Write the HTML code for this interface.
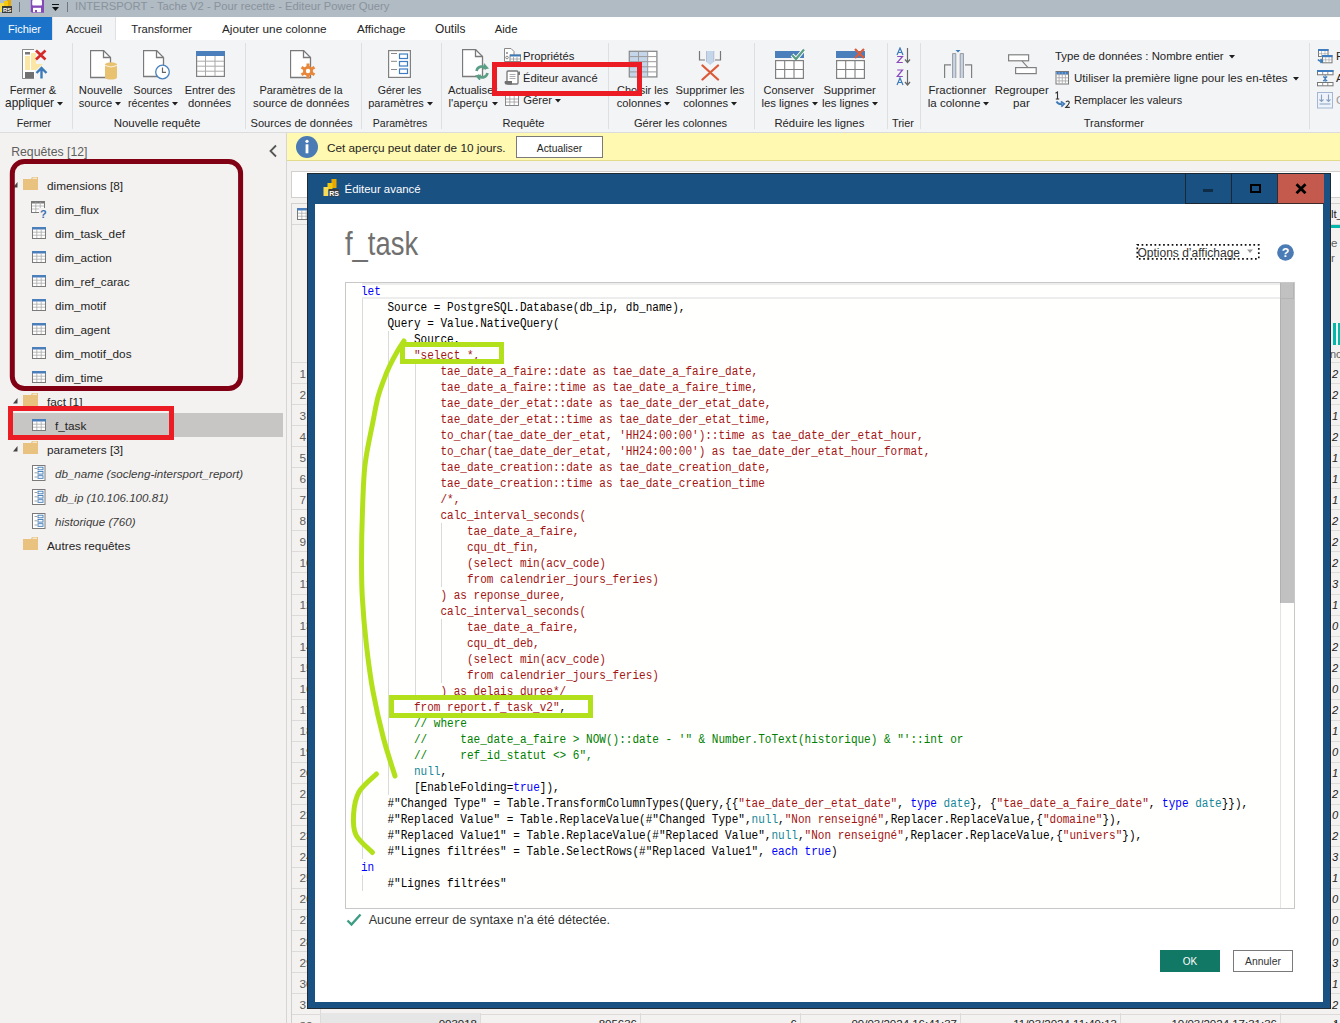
<!DOCTYPE html>
<html><head><meta charset="utf-8"><title>Power Query</title>
<style>
html,body{margin:0;padding:0;}
body{width:1340px;height:1023px;position:relative;overflow:hidden;background:#f3f2f1;font-family:"Liberation Sans",sans-serif;}
.t{position:absolute;white-space:nowrap;line-height:40px;}
.r{position:absolute;box-sizing:border-box;}
.code{position:absolute;font-family:"Liberation Mono",monospace;font-size:12px;line-height:16px;white-space:pre;color:#000;transform:scaleX(0.9193);transform-origin:0 0;}
.k{color:#0000ff}.s{color:#a31515}.c{color:#008000}.n{color:#16879a}
</style></head><body>

<div class="r" style="left:0px;top:0px;width:1340px;height:17px;background:#b0bbc4"></div>
<div class="t" style="left:75.0px;top:-14.00px;font-size:11.25px;color:#8a929b;">INTERSPORT - Tache V2 - Pour recette - Editeur Power Query</div>
<svg class="r" style="left:0px;top:0px" width="14" height="14" viewBox="0 0 14 14"><rect x="7" y="-2" width="4" height="10" fill="#e8a800"/><rect x="4" y="1" width="4" height="8" fill="#f2c811"/><rect x="0" y="3" width="4" height="9" fill="#f7d94c"/><rect x="2" y="6" width="10" height="7" fill="#3b3b3b"/><text x="3" y="12" font-size="6" fill="#fff" font-family="Liberation Sans" font-weight="bold">RS</text></svg>
<div class="r" style="left:19px;top:2px;width:1px;height:10px;background:#6e767e"></div>
<svg class="r" style="left:30px;top:0px" width="15" height="14" viewBox="0 0 15 14"><path d="M0.8 0 H14 V12.8 H2 L0.8 11.6 Z" fill="#8548b8"/><rect x="2.2" y="0" width="9.8" height="5.6" rx="1" fill="#fff"/><rect x="3" y="7.8" width="8" height="4.4" fill="#fff"/><rect x="5" y="10" width="2" height="2.2" fill="#8548b8"/></svg>
<svg class="r" style="left:52px;top:3px" width="8" height="8" viewBox="0 0 8 8"><rect x="0" y="1" width="7" height="1" fill="#111"/><path d="M0 4 H7 L3.5 8 Z" fill="#111"/></svg>
<div class="r" style="left:67px;top:2px;width:1px;height:10px;background:#6e767e"></div>
<div class="r" style="left:0px;top:17px;width:1340px;height:23px;background:#ffffff"></div>
<div class="r" style="left:0px;top:40px;width:1340px;height:1px;background:#d8d8d8"></div>
<div class="r" style="left:0px;top:17px;width:52px;height:23px;background:#1a73c8"></div>
<div class="r" style="left:52px;top:17px;width:64px;height:24px;background:#f3f4f6;border-left:1px solid #e1e1e1;border-right:1px solid #e1e1e1"></div>
<div class="t" style="left:8.0px;top:9.00px;font-size:11.0px;color:#ffffff;">Fichier</div>
<div class="t" style="left:66.0px;top:9.00px;font-size:11.13px;color:#262626;">Accueil</div>
<div class="t" style="left:131.2px;top:9.00px;font-size:11.25px;color:#262626;">Transformer</div>
<div class="t" style="left:222.0px;top:9.00px;font-size:11.77px;color:#262626;">Ajouter une colonne</div>
<div class="t" style="left:357.0px;top:9.00px;font-size:11.7px;color:#262626;">Affichage</div>
<div class="t" style="left:435.0px;top:9.00px;font-size:11.9px;color:#262626;">Outils</div>
<div class="t" style="left:494.7px;top:9.00px;font-size:11.41px;color:#262626;">Aide</div>
<div class="r" style="left:0px;top:40px;width:1340px;height:93px;background:#f3f4f6;border-bottom:1px solid #dcdcdc"></div>
<div class="r" style="left:72px;top:43px;width:1px;height:86px;background:#dedfe0"></div>
<div class="r" style="left:245px;top:43px;width:1px;height:86px;background:#dedfe0"></div>
<div class="r" style="left:361px;top:43px;width:1px;height:86px;background:#dedfe0"></div>
<div class="r" style="left:441px;top:43px;width:1px;height:86px;background:#dedfe0"></div>
<div class="r" style="left:608px;top:43px;width:1px;height:86px;background:#dedfe0"></div>
<div class="r" style="left:754px;top:43px;width:1px;height:86px;background:#dedfe0"></div>
<div class="r" style="left:887px;top:43px;width:1px;height:86px;background:#dedfe0"></div>
<div class="r" style="left:920px;top:43px;width:1px;height:86px;background:#dedfe0"></div>
<div class="r" style="left:1309px;top:43px;width:1px;height:86px;background:#dedfe0"></div>
<svg class="r" style="left:22px;top:49px" width="26" height="31" viewBox="0 0 26 31"><path d="M0.5 0.5 H12 M0.5 0.5 V29.5 H12" stroke="#8a8a8a" fill="none"/>
<rect x="1" y="1" width="12" height="28" fill="#fff"/>
<path d="M0.5 0.5 H12 M0.5 0.5 V29.5 H12" stroke="#8a8a8a" fill="none"/>
<rect x="3" y="3" width="5" height="2.5" fill="#777"/>
<rect x="3" y="7" width="5" height="14" fill="#fbe6a6"/>
<path d="M9 4 H14 V15 L21 15 L14 21 H9 Z" fill="#fbe6a6"/>
<rect x="3" y="23" width="9" height="6" fill="#707070"/>
<path d="M14 1.5 L23.5 10.5 M23.5 1.5 L14 10.5" stroke="#d42a2a" stroke-width="2.6"/>
<path d="M19.5 29.5 V20 M14.5 24 L19.5 19 L24.5 24" stroke="#3d7ab8" stroke-width="2.4" fill="none"/></svg>
<div class="t" style="left:9.8px;top:70.00px;font-size:11.17px;color:#252525;">Fermer &amp;</div>
<div class="t" style="left:5.1px;top:83.00px;font-size:11.88px;color:#252525;">appliquer</div>
<svg class="r" style="left:56.9453125px;top:101.8px" width="7" height="4" viewBox="0 0 7 4"><path d="M0 0 H6 L3 3.5 Z" fill="#1e1e1e"/></svg>
<div class="t" style="left:16.7px;top:103.00px;font-size:10.66px;color:#252525;">Fermer</div>
<svg class="r" style="left:90px;top:50px" width="28" height="30" viewBox="0 0 28 30"><path d="M0.5 0.5 H13.5 L20.5 7.5 V27.5 H0.5 Z" fill="#fff" stroke="#7a7a7a" stroke-width="1.3"/><path d="M13.5 0.5 V7.5 H20.5" fill="none" stroke="#7a7a7a" stroke-width="1.3"/><ellipse cx="21" cy="14.5" rx="6" ry="2.2" fill="#e8c271"/><rect x="15" y="14.5" width="12" height="13" fill="#e8c271"/><ellipse cx="21" cy="27.5" rx="6" ry="2" fill="#e8c271"/><path d="M15 15.5 Q21 18.5 27 15.5" stroke="#fff" stroke-width="0.8" fill="none"/></svg>
<div class="t" style="left:78.8px;top:70.00px;font-size:11.24px;color:#252525;">Nouvelle</div>
<div class="t" style="left:78.8px;top:83.00px;font-size:11.11px;color:#252525;">source</div>
<svg class="r" style="left:115.171875px;top:101.8px" width="7" height="4" viewBox="0 0 7 4"><path d="M0 0 H6 L3 3.5 Z" fill="#1e1e1e"/></svg>
<svg class="r" style="left:143px;top:50px" width="28" height="30" viewBox="0 0 28 30"><path d="M0.5 0.5 H13.5 L20.5 7.5 V26.5 H0.5 Z" fill="#fff" stroke="#7a7a7a" stroke-width="1.3"/><path d="M13.5 0.5 V7.5 H20.5" fill="none" stroke="#7a7a7a" stroke-width="1.3"/><circle cx="19.5" cy="22" r="6.8" fill="#fff" stroke="#4a82bf" stroke-width="1.3"/><path d="M19.5 17.5 V22.3 H23" stroke="#666" stroke-width="1.2" fill="none"/></svg>
<div class="t" style="left:133.6px;top:70.00px;font-size:10.55px;color:#252525;">Sources</div>
<div class="t" style="left:127.9px;top:83.00px;font-size:10.73px;color:#252525;">récentes</div>
<svg class="r" style="left:172.0703125px;top:101.8px" width="7" height="4" viewBox="0 0 7 4"><path d="M0 0 H6 L3 3.5 Z" fill="#1e1e1e"/></svg>
<svg class="r" style="left:196px;top:51px" width="29" height="26" viewBox="0 0 29 26"><rect x="0.6" y="0.6" width="27.8" height="24.8" fill="#fff" stroke="#808080" stroke-width="1.2"/><rect x="0" y="0" width="29" height="5" fill="#4a7fbb"/><path d="M9.5 5 V25 M19 5 V25 M1 10.2 H28 M1 15.2 H28 M1 20.2 H28" stroke="#aaa" stroke-width="1"/></svg>
<div class="t" style="left:184.7px;top:70.00px;font-size:10.99px;color:#252525;">Entrer des</div>
<div class="t" style="left:187.9px;top:83.00px;font-size:11.28px;color:#252525;">données</div>
<div class="t" style="left:113.7px;top:103.00px;font-size:11.46px;color:#252525;">Nouvelle requête</div>
<svg class="r" style="left:290px;top:50px" width="30" height="30" viewBox="0 0 30 30"><path d="M0.5 0.5 H13.5 L20.5 7.5 V27.5 H0.5 Z" fill="#fff" stroke="#7a7a7a" stroke-width="1.3"/><path d="M13.5 0.5 V7.5 H20.5" fill="none" stroke="#7a7a7a" stroke-width="1.3"/><g transform="translate(18,21)"><circle r="5" fill="#e8873a"/><g stroke="#e8873a" stroke-width="3"><path d="M0 -7.5 V7.5 M-6.5 -3.75 L6.5 3.75 M-6.5 3.75 L6.5 -3.75"/></g><circle r="2.2" fill="#fff"/></g></svg>
<div class="t" style="left:259.5px;top:70.00px;font-size:10.92px;color:#252525;">Paramètres de la</div>
<div class="t" style="left:253.0px;top:83.00px;font-size:11.34px;color:#252525;">source de données</div>
<div class="t" style="left:250.5px;top:103.00px;font-size:11.14px;color:#252525;">Sources de données</div>
<svg class="r" style="left:388px;top:50px" width="23" height="28" viewBox="0 0 23 28"><rect x="0.6" y="0.6" width="21.8" height="26.8" fill="#fff" stroke="#808080" stroke-width="1.2"/><path d="M3 3.5 H9 M3 11.3 H9 M3 19.5 H9" stroke="#888" stroke-width="1"/><rect x="11.5" y="4" width="8" height="4.5" fill="none" stroke="#3f7cc0" stroke-width="1.2"/><rect x="11.5" y="11.5" width="8" height="4.5" fill="none" stroke="#3f7cc0" stroke-width="1.2"/><rect x="11.5" y="19" width="8" height="4.5" fill="none" stroke="#3f7cc0" stroke-width="1.2"/></svg>
<div class="t" style="left:377.7px;top:70.00px;font-size:10.64px;color:#252525;">Gérer les</div>
<div class="t" style="left:368.2px;top:83.00px;font-size:10.99px;color:#252525;">paramètres</div>
<svg class="r" style="left:426.78125px;top:101.8px" width="7" height="4" viewBox="0 0 7 4"><path d="M0 0 H6 L3 3.5 Z" fill="#1e1e1e"/></svg>
<div class="t" style="left:372.8px;top:103.00px;font-size:10.56px;color:#252525;">Paramètres</div>
<svg class="r" style="left:462px;top:49px" width="30" height="31" viewBox="0 0 30 31"><path d="M0.5 0.5 H13.5 L20.5 7.5 V27.5 H0.5 Z" fill="#fff" stroke="#7a7a7a" stroke-width="1.3"/><path d="M13.5 0.5 V7.5 H20.5" fill="none" stroke="#7a7a7a" stroke-width="1.3"/><g transform="translate(20,23)" stroke="#5a9e86" stroke-width="2.6" fill="none"><path d="M-5.5 -1 A5.5 5.5 0 0 1 4.5 -3"/><path d="M5.5 1 A5.5 5.5 0 0 1 -4.5 3"/></g><path d="M22 14 L27 19.5 L21 20.5 Z" fill="#5a9e86"/><path d="M18 32 L13 26.5 L19 25.5 Z" fill="#5a9e86"/></svg>
<div class="t" style="left:448.0px;top:70.00px;font-size:11.2px;color:#252525;">Actualiser</div>
<div class="t" style="left:448.6px;top:83.00px;font-size:11.3px;color:#252525;">l&#x27;aperçu</div>
<svg class="r" style="left:492px;top:101.8px" width="7" height="4" viewBox="0 0 7 4"><path d="M0 0 H6 L3 3.5 Z" fill="#1e1e1e"/></svg>
<div class="t" style="left:502.6px;top:103.00px;font-size:11.1px;color:#252525;">Requête</div>
<svg class="r" style="left:504px;top:48px" width="17" height="14" viewBox="0 0 17 14"><path d="M0.5 0.5 H7 L10 3.5 V13.5 H0.5 Z" fill="#fff" stroke="#888"/><circle cx="3" cy="5" r="1" fill="#888"/><circle cx="3" cy="9.5" r="1.3" fill="none" stroke="#888"/><rect x="6" y="7" width="10.5" height="6.5" fill="#fff" stroke="#888"/><rect x="6" y="6.5" width="11" height="2" fill="#3d7ab8"/><path d="M9.5 9 V13 M13 9 V13 M6 11 H16" stroke="#999" stroke-width="0.8"/></svg>
<div class="t" style="left:523.0px;top:36.00px;font-size:11.25px;color:#252525;">Propriétés</div>
<svg class="r" style="left:504px;top:70px" width="17" height="16" viewBox="0 0 17 16"><path d="M3.5 1 H15 V4 H16 V2 L15 1" fill="#777"/><rect x="3" y="1" width="11" height="13" rx="1" fill="#fff" stroke="#777" stroke-width="1.3"/><rect x="14" y="2" width="2" height="3" fill="#777"/><path d="M5.5 4.5 H11.5 M5.5 6.5 H11.5 M5.5 8.5 H11.5" stroke="#999" stroke-width="0.8"/><path d="M1 11 H8 V14.5 H1.5 Q0 13 1 11 Z" fill="#707070"/></svg>
<div class="t" style="left:523.0px;top:58.00px;font-size:11.2px;color:#252525;">Éditeur avancé</div>
<svg class="r" style="left:505px;top:95px" width="14" height="11" viewBox="0 0 14 11"><rect x="0.5" y="0.5" width="13" height="10" fill="#fff" stroke="#888"/><path d="M4.8 1 V10 M9.2 1 V10 M1 4 H13 M1 7 H13" stroke="#999" stroke-width="0.8"/></svg>
<div class="t" style="left:523.2px;top:80.00px;font-size:11.3px;color:#252525;">Gérer</div>
<svg class="r" style="left:555px;top:98.5px" width="7" height="4" viewBox="0 0 7 4"><path d="M0 0 H6 L3 3.5 Z" fill="#1e1e1e"/></svg>
<svg class="r" style="left:628px;top:50px" width="30" height="28" viewBox="0 0 30 28"><rect x="1.3" y="1.3" width="27.6" height="25.6" fill="#fff" stroke="#808080" stroke-width="1.2"/><rect x="1.9" y="1.9" width="17.8" height="24.4" fill="#c5d6ea"/><path d="M10.5 1.5 V26.5 M19.7 1.5 V26.5 M1.5 6.6 H28.5 M1.5 11.7 H28.5 M1.5 16.8 H28.5 M1.5 21.9 H28.5" stroke="#9a9a9a" stroke-width="1"/></svg>
<div class="t" style="left:617.1px;top:70.00px;font-size:10.98px;color:#252525;">Choisir les</div>
<div class="t" style="left:616.7px;top:83.00px;font-size:11.16px;color:#252525;">colonnes</div>
<svg class="r" style="left:664.328125px;top:101.8px" width="7" height="4" viewBox="0 0 7 4"><path d="M0 0 H6 L3 3.5 Z" fill="#1e1e1e"/></svg>
<svg class="r" style="left:698px;top:50px" width="24" height="31" viewBox="0 0 24 31"><path d="M1.5 1 V10 H7 M22.5 1 V10 H17" stroke="#777" stroke-width="1.2" fill="none"/><path d="M8.5 1 H15.8 V12 L12.1 15 L8.5 12 Z" fill="#c5d6ea"/><path d="M8.5 1 V12 M15.8 1 V12" stroke="#a8b8cc" stroke-width="0.8"/><path d="M4.5 15.5 L20 29.5 M20 15.5 L4.5 29.5" stroke="#dc5a38" stroke-width="2.3" stroke-linecap="round"/></svg>
<div class="t" style="left:675.6px;top:70.00px;font-size:11.14px;color:#252525;">Supprimer les</div>
<div class="t" style="left:683.2px;top:83.00px;font-size:11.26px;color:#252525;">colonnes</div>
<svg class="r" style="left:731.2px;top:101.8px" width="7" height="4" viewBox="0 0 7 4"><path d="M0 0 H6 L3 3.5 Z" fill="#1e1e1e"/></svg>
<div class="t" style="left:633.9px;top:103.00px;font-size:11.11px;color:#252525;">Gérer les colonnes</div>
<svg class="r" style="left:775px;top:48px" width="30" height="31" viewBox="0 0 30 31"><rect x="0" y="3" width="29" height="7" fill="#4a7fbb"/><path d="M17 7 L21 11 L29 1.5" stroke="#fff" stroke-width="4" fill="none"/><path d="M17 7 L21 11 L29 1.5" stroke="#5a9e86" stroke-width="2.2" fill="none"/><rect x="0.6" y="12.6" width="27.8" height="17.8" fill="#fff" stroke="#808080" stroke-width="1.2"/><path d="M9.7 13 V30 M19 13 V30 M1 21.5 H28" stroke="#808080" stroke-width="1.1"/></svg>
<div class="t" style="left:763.5px;top:70.00px;font-size:10.98px;color:#252525;">Conserver</div>
<div class="t" style="left:761.4px;top:83.00px;font-size:11.34px;color:#252525;">les lignes</div>
<svg class="r" style="left:811.609375px;top:101.8px" width="7" height="4" viewBox="0 0 7 4"><path d="M0 0 H6 L3 3.5 Z" fill="#1e1e1e"/></svg>
<svg class="r" style="left:836px;top:48px" width="30" height="31" viewBox="0 0 30 31"><rect x="0" y="3" width="29" height="7" fill="#4a7fbb"/><path d="M19 1 L28 10 M28 1 L19 10" stroke="#db5b3a" stroke-width="2.2"/><rect x="0.6" y="12.6" width="27.8" height="17.8" fill="#fff" stroke="#808080" stroke-width="1.2"/><path d="M9.7 13 V30 M19 13 V30 M1 21.5 H28" stroke="#808080" stroke-width="1.1"/></svg>
<div class="t" style="left:823.5px;top:70.00px;font-size:11.33px;color:#252525;">Supprimer</div>
<div class="t" style="left:821.9px;top:83.00px;font-size:11.3px;color:#252525;">les lignes</div>
<svg class="r" style="left:872.0625px;top:101.8px" width="7" height="4" viewBox="0 0 7 4"><path d="M0 0 H6 L3 3.5 Z" fill="#1e1e1e"/></svg>
<div class="t" style="left:774.4px;top:103.00px;font-size:11.32px;color:#252525;">Réduire les lignes</div>
<svg class="r" style="left:896px;top:47px" width="16" height="40" viewBox="0 0 16 40"><g fill="none" stroke-width="1.2"><path d="M1 8 L4 1 L7 8 M2.2 5.5 H5.8" stroke="#3d7ab8"/><path d="M1.2 9.5 H6.5 L1.2 15.5 H6.8" stroke="#8b4bbd"/><path d="M1.2 23 H6.5 L1.2 29.5 H6.8" stroke="#8b4bbd"/><path d="M1 38 L4 31 L7 38 M2.2 35.5 H5.8" stroke="#3d7ab8"/><path d="M11.5 1 V15.5 M9 12.5 L11.5 15.5 L14 12.5 M11.5 23 V38 M9 35 L11.5 38 L14 35" stroke="#666"/></g></svg>
<div class="t" style="left:892.0px;top:103.00px;font-size:10.87px;color:#252525;">Trier</div>
<svg class="r" style="left:943px;top:48px" width="30" height="31" viewBox="0 0 30 31"><path d="M1.6 30 V16.8 H8 M28.6 30 V16.8 H22" stroke="#808080" stroke-width="1.2" fill="none"/><rect x="9.2" y="5.2" width="3.6" height="24.8" fill="#c5d6ea"/><rect x="17.2" y="5.2" width="3.6" height="24.8" fill="#c5d6ea"/><path d="M9.6 30 V5.6 H12.8 V30 M17.2 30 V5.6 H20.4 V30" stroke="#9a9a9a" stroke-width="1" fill="none"/><path d="M12.5 2 H17.5 L15 4.6 Z" fill="#3d7ab8"/></svg>
<div class="t" style="left:928.5px;top:70.00px;font-size:11.46px;color:#252525;">Fractionner</div>
<div class="t" style="left:927.7px;top:83.00px;font-size:11.56px;color:#252525;">la colonne</div>
<svg class="r" style="left:983.3203125px;top:101.8px" width="7" height="4" viewBox="0 0 7 4"><path d="M0 0 H6 L3 3.5 Z" fill="#1e1e1e"/></svg>
<svg class="r" style="left:1007px;top:53px" width="31" height="22" viewBox="0 0 31 22"><rect x="1.6" y="1.8" width="20" height="6" fill="#fff" stroke="#808080" stroke-width="1.2"/><rect x="8.6" y="14.6" width="20.6" height="6" fill="#fff" stroke="#808080" stroke-width="1.2"/><path d="M15 7.8 L21 14.6" stroke="#808080" stroke-width="1.1"/></svg>
<div class="t" style="left:994.7px;top:70.00px;font-size:11.45px;color:#252525;">Regrouper</div>
<div class="t" style="left:1013.1px;top:83.00px;font-size:11.56px;color:#252525;">par</div>
<div class="t" style="left:1055.0px;top:36.00px;font-size:11.36px;color:#252525;">Type de données : Nombre entier</div>
<svg class="r" style="left:1229px;top:54.5px" width="7" height="4" viewBox="0 0 7 4"><path d="M0 0 H6 L3 3.5 Z" fill="#1e1e1e"/></svg>
<svg class="r" style="left:1055px;top:71px" width="15" height="14" viewBox="0 0 15 14"><rect x="1" y="0.5" width="12.5" height="12.5" fill="#fff" stroke="#777" stroke-width="1"/><path d="M4.1 1 V12.5 M7.25 1 V12.5 M10.4 1 V12.5 M1.5 3.6 H13 M1.5 6.75 H13 M1.5 9.9 H13" stroke="#aaa" stroke-width="0.9"/><path d="M1.5 1 H13 V3.2 H1.5 Z" fill="#3f7cc0"/><path d="M4.1 1 V3.2 M7.25 1 V3.2 M10.4 1 V3.2" stroke="#9bb8d8" stroke-width="0.7"/></svg>
<div class="t" style="left:1074.0px;top:58.00px;font-size:11.58px;color:#252525;">Utiliser la première ligne pour les en-têtes</div>
<svg class="r" style="left:1293px;top:76.5px" width="7" height="4" viewBox="0 0 7 4"><path d="M0 0 H6 L3 3.5 Z" fill="#1e1e1e"/></svg>
<svg class="r" style="left:1054px;top:91px" width="18" height="18" viewBox="0 0 18 18"><path d="M1.5 2.2 L3.5 1 V8" stroke="#333" stroke-width="1.1" fill="none"/><path d="M1.8 8 H5.2" stroke="#333" stroke-width="1.1"/><path d="M12 11.2 Q12.2 10 13.8 10 Q15.5 10.2 15.2 11.8 Q14.8 13.3 11.8 16.4 H15.8" stroke="#333" stroke-width="1.1" fill="none"/><path d="M2.5 10.5 Q4 13.5 8 13" stroke="#3d7ab8" stroke-width="1.8" fill="none"/><path d="M6.8 10.5 L10.2 12.8 L7.3 15.6" stroke="#3d7ab8" stroke-width="1.8" fill="none"/></svg>
<div class="t" style="left:1074.0px;top:80.00px;font-size:10.95px;color:#252525;">Remplacer les valeurs</div>
<div class="t" style="left:1083.7px;top:103.00px;font-size:11.14px;color:#252525;">Transformer</div>
<svg class="r" style="left:1316px;top:48px" width="18" height="16" viewBox="0 0 18 16"><rect x="2.5" y="1.5" width="9.5" height="7" fill="#fff" stroke="#777" stroke-width="1"/><rect x="2" y="1" width="10.5" height="2" fill="#3f7cc0"/><path d="M5.5 3 V8.5 M9 3 V8.5 M2.5 5.7 H12" stroke="#aaa" stroke-width="0.7"/><rect x="6.5" y="7.5" width="9.5" height="7.3" fill="#fff" stroke="#777" stroke-width="1"/><rect x="6" y="7" width="10.5" height="2.2" fill="#3f7cc0"/><path d="M9.7 9 V14.5 M13 9 V14.5 M6.5 11.8 H16" stroke="#aaa" stroke-width="0.7"/><path d="M2 11.5 Q3.5 13.5 6 13" stroke="#3d7ab8" stroke-width="1.6" fill="none"/><path d="M4.5 11 L6.5 13 L4.5 15" stroke="#3d7ab8" stroke-width="1.5" fill="none"/></svg>
<svg class="r" style="left:1316px;top:69px" width="18" height="18" viewBox="0 0 18 18"><rect x="1.5" y="1.5" width="15.5" height="4.3" fill="#fff" stroke="#777" stroke-width="1"/><rect x="1" y="1" width="16.5" height="2" fill="#3f7cc0"/><path d="M6.7 3 V5.8 M11.8 3 V5.8" stroke="#777" stroke-width="0.8"/><rect x="1.5" y="13.5" width="15.5" height="3.3" fill="#fff" stroke="#777" stroke-width="1"/><path d="M6.7 13.5 V16.8 M11.8 13.5 V16.8" stroke="#777" stroke-width="0.8"/><path d="M7.2 7.5 L9.2 9 L11.2 7.5 M7.2 12 L9.2 10.5 L11.2 12" stroke="#3d7ab8" stroke-width="1.4" fill="none"/><path d="M9.2 5.8 V13.5" stroke="#3d7ab8" stroke-width="0.8"/></svg>
<svg class="r" style="left:1316px;top:91px" width="18" height="18" viewBox="0 0 18 18"><rect x="1.5" y="1.5" width="15" height="15.5" fill="#eef3fb" stroke="#a3b7d2" stroke-width="1"/><path d="M5.5 3.5 V10.5 M3.5 8.5 L5.5 10.5 L7.5 8.5 M12.5 3.5 V10.5 M10.5 8.5 L12.5 10.5 L14.5 8.5 M3.5 13 H14.5" stroke="#8aa2c0" stroke-width="1.1" fill="none"/></svg>
<div class="t" style="left:1336.0px;top:36.00px;font-size:11.5px;color:#252525;">F</div>
<div class="t" style="left:1336.0px;top:58.00px;font-size:11.5px;color:#252525;">A</div>
<div class="t" style="left:1336.0px;top:80.00px;font-size:11.5px;color:#9a9a9a;">C</div>
<div class="r" style="left:0px;top:133px;width:286px;height:890px;background:#f3f2f1"></div>
<div class="r" style="left:286px;top:133px;width:1px;height:890px;background:#d6d5d4"></div>
<div class="t" style="left:11.2px;top:132.00px;font-size:12.26px;color:#5f5e5d;">Requêtes [12]</div>
<svg class="r" style="left:268px;top:144px" width="10" height="14" viewBox="0 0 10 14"><path d="M8 1.5 L2.5 7 L8 12.5" stroke="#555" stroke-width="1.8" fill="none"/></svg>
<div class="r" style="left:13px;top:413px;width:270px;height:24px;background:#c8c6c4"></div>
<svg class="r" style="left:13px;top:182px" width="5" height="6" viewBox="0 0 5 6"><path d="M4.5 0 V5.5 H0 Z" fill="#444"/></svg>
<svg class="r" style="left:23px;top:177px" width="16" height="14" viewBox="0 0 16 14"><path d="M0 2 H8 L9 0 H15 V13 H0 Z" fill="#e8c27e"/><path d="M9.5 1.2 H14" stroke="#fff" stroke-width="0.9"/></svg>
<div class="t" style="left:47.0px;top:166.00px;font-size:11.8px;color:#252423;">dimensions [8]</div>
<svg class="r" style="left:31px;top:201px" width="17" height="17" viewBox="0 0 17 17"><rect x="0.5" y="0.5" width="13" height="11" fill="#fff" stroke="#7a7a7a"/><rect x="0" y="0" width="14" height="2.5" fill="#7a7a7a"/><path d="M4.8 1 V11 M9.2 1 V11 M1 5 H13 M1 8 H13" stroke="#aaa" stroke-width="0.8"/><rect x="8" y="7" width="9" height="10" fill="#f3f2f1"/><text x="9" y="16.5" font-size="11" font-weight="bold" fill="#3d6fb0" font-family="Liberation Sans">?</text></svg>
<div class="t" style="left:55.0px;top:190.00px;font-size:11.78px;color:#252423;">dim_flux</div>
<svg class="r" style="left:32px;top:227px" width="14" height="12" viewBox="0 0 14 12"><rect x="0.5" y="0.5" width="13" height="11" fill="#fff" stroke="#7a7a7a"/><rect x="0" y="0" width="14" height="2.5" fill="#4a7fbb"/><path d="M4.8 2 V11 M9.2 2 V11 M1 5.2 H13 M1 8.2 H13" stroke="#aaa" stroke-width="0.8"/></svg>
<div class="t" style="left:55.0px;top:214.00px;font-size:11.78px;color:#252423;">dim_task_def</div>
<svg class="r" style="left:32px;top:251px" width="14" height="12" viewBox="0 0 14 12"><rect x="0.5" y="0.5" width="13" height="11" fill="#fff" stroke="#7a7a7a"/><rect x="0" y="0" width="14" height="2.5" fill="#4a7fbb"/><path d="M4.8 2 V11 M9.2 2 V11 M1 5.2 H13 M1 8.2 H13" stroke="#aaa" stroke-width="0.8"/></svg>
<div class="t" style="left:55.0px;top:238.00px;font-size:11.78px;color:#252423;">dim_action</div>
<svg class="r" style="left:32px;top:275px" width="14" height="12" viewBox="0 0 14 12"><rect x="0.5" y="0.5" width="13" height="11" fill="#fff" stroke="#7a7a7a"/><rect x="0" y="0" width="14" height="2.5" fill="#4a7fbb"/><path d="M4.8 2 V11 M9.2 2 V11 M1 5.2 H13 M1 8.2 H13" stroke="#aaa" stroke-width="0.8"/></svg>
<div class="t" style="left:55.0px;top:262.00px;font-size:11.78px;color:#252423;">dim_ref_carac</div>
<svg class="r" style="left:32px;top:299px" width="14" height="12" viewBox="0 0 14 12"><rect x="0.5" y="0.5" width="13" height="11" fill="#fff" stroke="#7a7a7a"/><rect x="0" y="0" width="14" height="2.5" fill="#4a7fbb"/><path d="M4.8 2 V11 M9.2 2 V11 M1 5.2 H13 M1 8.2 H13" stroke="#aaa" stroke-width="0.8"/></svg>
<div class="t" style="left:55.0px;top:286.00px;font-size:11.78px;color:#252423;">dim_motif</div>
<svg class="r" style="left:32px;top:323px" width="14" height="12" viewBox="0 0 14 12"><rect x="0.5" y="0.5" width="13" height="11" fill="#fff" stroke="#7a7a7a"/><rect x="0" y="0" width="14" height="2.5" fill="#4a7fbb"/><path d="M4.8 2 V11 M9.2 2 V11 M1 5.2 H13 M1 8.2 H13" stroke="#aaa" stroke-width="0.8"/></svg>
<div class="t" style="left:55.0px;top:310.00px;font-size:11.78px;color:#252423;">dim_agent</div>
<svg class="r" style="left:32px;top:347px" width="14" height="12" viewBox="0 0 14 12"><rect x="0.5" y="0.5" width="13" height="11" fill="#fff" stroke="#7a7a7a"/><rect x="0" y="0" width="14" height="2.5" fill="#4a7fbb"/><path d="M4.8 2 V11 M9.2 2 V11 M1 5.2 H13 M1 8.2 H13" stroke="#aaa" stroke-width="0.8"/></svg>
<div class="t" style="left:55.0px;top:334.00px;font-size:11.78px;color:#252423;">dim_motif_dos</div>
<svg class="r" style="left:32px;top:371px" width="14" height="12" viewBox="0 0 14 12"><rect x="0.5" y="0.5" width="13" height="11" fill="#fff" stroke="#7a7a7a"/><rect x="0" y="0" width="14" height="2.5" fill="#4a7fbb"/><path d="M4.8 2 V11 M9.2 2 V11 M1 5.2 H13 M1 8.2 H13" stroke="#aaa" stroke-width="0.8"/></svg>
<div class="t" style="left:55.0px;top:358.00px;font-size:11.78px;color:#252423;">dim_time</div>
<svg class="r" style="left:13px;top:398px" width="5" height="6" viewBox="0 0 5 6"><path d="M4.5 0 V5.5 H0 Z" fill="#444"/></svg>
<svg class="r" style="left:23px;top:393px" width="16" height="14" viewBox="0 0 16 14"><path d="M0 2 H8 L9 0 H15 V13 H0 Z" fill="#e8c27e"/><path d="M9.5 1.2 H14" stroke="#fff" stroke-width="0.9"/></svg>
<div class="t" style="left:47.0px;top:382.00px;font-size:11.8px;color:#252423;">fact [1]</div>
<svg class="r" style="left:32px;top:419px" width="14" height="12" viewBox="0 0 14 12"><rect x="0.5" y="0.5" width="13" height="11" fill="#fff" stroke="#7a7a7a"/><rect x="0" y="0" width="14" height="2.5" fill="#4a7fbb"/><path d="M4.8 2 V11 M9.2 2 V11 M1 5.2 H13 M1 8.2 H13" stroke="#aaa" stroke-width="0.8"/></svg>
<div class="t" style="left:55.0px;top:406.00px;font-size:11.78px;color:#252423;">f_task</div>
<svg class="r" style="left:13px;top:446px" width="5" height="6" viewBox="0 0 5 6"><path d="M4.5 0 V5.5 H0 Z" fill="#444"/></svg>
<svg class="r" style="left:23px;top:441px" width="16" height="14" viewBox="0 0 16 14"><path d="M0 2 H8 L9 0 H15 V13 H0 Z" fill="#e8c27e"/><path d="M9.5 1.2 H14" stroke="#fff" stroke-width="0.9"/></svg>
<div class="t" style="left:47.0px;top:430.00px;font-size:11.8px;color:#252423;">parameters [3]</div>
<svg class="r" style="left:32px;top:465px" width="14" height="16" viewBox="0 0 14 16"><rect x="0.5" y="0.5" width="12.5" height="15" fill="#fff" stroke="#7a7a7a"/><path d="M2.5 3.5 H5 M2.5 7.8 H5 M2.5 12 H5" stroke="#888" stroke-width="0.8"/><rect x="6" y="2.2" width="5" height="2.6" fill="none" stroke="#3d7ab8" stroke-width="0.9"/><rect x="6" y="6.5" width="5" height="2.6" fill="none" stroke="#3d7ab8" stroke-width="0.9"/><rect x="6" y="10.7" width="5" height="2.6" fill="none" stroke="#3d7ab8" stroke-width="0.9"/></svg>
<div class="t" style="left:55.0px;top:454.00px;font-size:11.6px;color:#3b3a39;font-style:italic;">db_name (socleng-intersport_report)</div>
<svg class="r" style="left:32px;top:489px" width="14" height="16" viewBox="0 0 14 16"><rect x="0.5" y="0.5" width="12.5" height="15" fill="#fff" stroke="#7a7a7a"/><path d="M2.5 3.5 H5 M2.5 7.8 H5 M2.5 12 H5" stroke="#888" stroke-width="0.8"/><rect x="6" y="2.2" width="5" height="2.6" fill="none" stroke="#3d7ab8" stroke-width="0.9"/><rect x="6" y="6.5" width="5" height="2.6" fill="none" stroke="#3d7ab8" stroke-width="0.9"/><rect x="6" y="10.7" width="5" height="2.6" fill="none" stroke="#3d7ab8" stroke-width="0.9"/></svg>
<div class="t" style="left:55.0px;top:478.00px;font-size:11.6px;color:#3b3a39;font-style:italic;">db_ip (10.106.100.81)</div>
<svg class="r" style="left:32px;top:513px" width="14" height="16" viewBox="0 0 14 16"><rect x="0.5" y="0.5" width="12.5" height="15" fill="#fff" stroke="#7a7a7a"/><path d="M2.5 3.5 H5 M2.5 7.8 H5 M2.5 12 H5" stroke="#888" stroke-width="0.8"/><rect x="6" y="2.2" width="5" height="2.6" fill="none" stroke="#3d7ab8" stroke-width="0.9"/><rect x="6" y="6.5" width="5" height="2.6" fill="none" stroke="#3d7ab8" stroke-width="0.9"/><rect x="6" y="10.7" width="5" height="2.6" fill="none" stroke="#3d7ab8" stroke-width="0.9"/></svg>
<div class="t" style="left:55.0px;top:502.00px;font-size:11.6px;color:#3b3a39;font-style:italic;">historique (760)</div>
<svg class="r" style="left:23px;top:537px" width="16" height="14" viewBox="0 0 16 14"><path d="M0 2 H8 L9 0 H15 V13 H0 Z" fill="#e8c27e"/><path d="M9.5 1.2 H14" stroke="#fff" stroke-width="0.9"/></svg>
<div class="t" style="left:47.0px;top:526.00px;font-size:11.8px;color:#252423;">Autres requêtes</div>
<svg class="r" style="left:0;top:0" width="290" height="450"><rect x="12.3" y="161.5" width="228.3" height="227" rx="12" ry="12" fill="none" stroke="#820014" stroke-width="5"/><rect x="10.5" y="408.5" width="161" height="29" fill="none" stroke="#ec1c24" stroke-width="5"/></svg>
<svg class="r" style="left:0;top:0" width="700" height="120"><rect x="494.5" y="64.5" width="145" height="29" fill="none" stroke="#ec1c24" stroke-width="5"/></svg>
<div class="r" style="left:287px;top:133px;width:1053px;height:28px;background:#fff9b1;border-bottom:1px solid #e3da8a"></div>
<svg class="r" style="left:296px;top:136px" width="22" height="22" viewBox="0 0 22 22"><circle cx="11" cy="11" r="11" fill="#4a7bb5"/><circle cx="11" cy="5.3" r="1.6" fill="#fff"/><rect x="9.6" y="8.3" width="2.8" height="9" fill="#fff"/></svg>
<div class="t" style="left:327.0px;top:128.00px;font-size:11.77px;color:#252423;">Cet aperçu peut dater de 10 jours.</div>
<div class="r" style="left:516px;top:136px;width:87px;height:22px;background:#fff;border:1px solid #7a7a7a"></div>
<div class="t" style="left:536.8px;top:129.00px;font-size:10.33px;color:#252423;">Actualiser</div>
<div class="r" style="left:291px;top:171px;width:1060px;height:27px;background:#fff;border:1px solid #d2d0ce"></div>
<div class="r" style="left:291px;top:203px;width:1049px;height:820px;background:#f3f2f1;border-left:1px solid #d2d0ce;border-top:1px solid #d2d0ce"></div>
<svg class="r" style="left:297px;top:208px" width="14" height="12" viewBox="0 0 14 12"><rect x="0.5" y="0.5" width="13" height="11" fill="#fff" stroke="#7a7a7a"/><rect x="0" y="0" width="14" height="2.5" fill="#4a7fbb"/><path d="M4.8 2 V11 M9.2 2 V11 M1 5.2 H13 M1 8.2 H13" stroke="#aaa" stroke-width="0.8"/></svg>
<div class="r" style="left:292px;top:224px;width:1048px;height:1px;background:#d9d8d7"></div>
<div class="r" style="left:292px;top:362px;width:1048px;height:1px;background:#dcdbda"></div>
<div class="r" style="left:292px;top:383px;width:1048px;height:1px;background:#dcdbda"></div>
<div class="r" style="left:292px;top:404px;width:1048px;height:1px;background:#dcdbda"></div>
<div class="r" style="left:292px;top:425px;width:1048px;height:1px;background:#dcdbda"></div>
<div class="r" style="left:292px;top:446px;width:1048px;height:1px;background:#dcdbda"></div>
<div class="r" style="left:292px;top:467px;width:1048px;height:1px;background:#dcdbda"></div>
<div class="r" style="left:292px;top:488px;width:1048px;height:1px;background:#dcdbda"></div>
<div class="r" style="left:292px;top:509px;width:1048px;height:1px;background:#dcdbda"></div>
<div class="r" style="left:292px;top:530px;width:1048px;height:1px;background:#dcdbda"></div>
<div class="r" style="left:292px;top:551px;width:1048px;height:1px;background:#dcdbda"></div>
<div class="r" style="left:292px;top:572px;width:1048px;height:1px;background:#dcdbda"></div>
<div class="r" style="left:292px;top:594px;width:1048px;height:1px;background:#dcdbda"></div>
<div class="r" style="left:292px;top:615px;width:1048px;height:1px;background:#dcdbda"></div>
<div class="r" style="left:292px;top:636px;width:1048px;height:1px;background:#dcdbda"></div>
<div class="r" style="left:292px;top:657px;width:1048px;height:1px;background:#dcdbda"></div>
<div class="r" style="left:292px;top:678px;width:1048px;height:1px;background:#dcdbda"></div>
<div class="r" style="left:292px;top:699px;width:1048px;height:1px;background:#dcdbda"></div>
<div class="r" style="left:292px;top:720px;width:1048px;height:1px;background:#dcdbda"></div>
<div class="r" style="left:292px;top:741px;width:1048px;height:1px;background:#dcdbda"></div>
<div class="r" style="left:292px;top:762px;width:1048px;height:1px;background:#dcdbda"></div>
<div class="r" style="left:292px;top:783px;width:1048px;height:1px;background:#dcdbda"></div>
<div class="r" style="left:292px;top:804px;width:1048px;height:1px;background:#dcdbda"></div>
<div class="r" style="left:292px;top:825px;width:1048px;height:1px;background:#dcdbda"></div>
<div class="r" style="left:292px;top:846px;width:1048px;height:1px;background:#dcdbda"></div>
<div class="r" style="left:292px;top:867px;width:1048px;height:1px;background:#dcdbda"></div>
<div class="r" style="left:292px;top:888px;width:1048px;height:1px;background:#dcdbda"></div>
<div class="r" style="left:292px;top:909px;width:1048px;height:1px;background:#dcdbda"></div>
<div class="r" style="left:292px;top:930px;width:1048px;height:1px;background:#dcdbda"></div>
<div class="r" style="left:292px;top:951px;width:1048px;height:1px;background:#dcdbda"></div>
<div class="r" style="left:292px;top:972px;width:1048px;height:1px;background:#dcdbda"></div>
<div class="r" style="left:292px;top:993px;width:1048px;height:1px;background:#dcdbda"></div>
<div class="r" style="left:292px;top:1014px;width:1048px;height:1px;background:#dcdbda"></div>
<div class="r" style="left:292px;top:1035px;width:1048px;height:1px;background:#dcdbda"></div>
<div class="r" style="left:320px;top:362px;width:1px;height:661px;background:#dcdbda"></div>
<div class="t" style="left:299.5px;top:354.00px;font-size:11.8px;color:#605e5c;">1</div>
<div class="t" style="left:299.5px;top:375.00px;font-size:11.8px;color:#605e5c;">2</div>
<div class="t" style="left:299.5px;top:396.00px;font-size:11.8px;color:#605e5c;">3</div>
<div class="t" style="left:299.5px;top:417.00px;font-size:11.8px;color:#605e5c;">4</div>
<div class="t" style="left:299.5px;top:438.00px;font-size:11.8px;color:#605e5c;">5</div>
<div class="t" style="left:299.5px;top:459.00px;font-size:11.8px;color:#605e5c;">6</div>
<div class="t" style="left:299.5px;top:480.00px;font-size:11.8px;color:#605e5c;">7</div>
<div class="t" style="left:299.5px;top:501.00px;font-size:11.8px;color:#605e5c;">8</div>
<div class="t" style="left:299.5px;top:522.00px;font-size:11.8px;color:#605e5c;">9</div>
<div class="t" style="left:299.5px;top:543.00px;font-size:11.8px;color:#605e5c;">10</div>
<div class="t" style="left:299.5px;top:564.00px;font-size:11.8px;color:#605e5c;">11</div>
<div class="t" style="left:299.5px;top:585.00px;font-size:11.8px;color:#605e5c;">12</div>
<div class="t" style="left:299.5px;top:606.00px;font-size:11.8px;color:#605e5c;">13</div>
<div class="t" style="left:299.5px;top:627.00px;font-size:11.8px;color:#605e5c;">14</div>
<div class="t" style="left:299.5px;top:648.00px;font-size:11.8px;color:#605e5c;">15</div>
<div class="t" style="left:299.5px;top:669.00px;font-size:11.8px;color:#605e5c;">16</div>
<div class="t" style="left:299.5px;top:690.00px;font-size:11.8px;color:#605e5c;">17</div>
<div class="t" style="left:299.5px;top:711.00px;font-size:11.8px;color:#605e5c;">18</div>
<div class="t" style="left:299.5px;top:732.00px;font-size:11.8px;color:#605e5c;">19</div>
<div class="t" style="left:299.5px;top:753.00px;font-size:11.8px;color:#605e5c;">20</div>
<div class="t" style="left:299.5px;top:774.00px;font-size:11.8px;color:#605e5c;">21</div>
<div class="t" style="left:299.5px;top:795.00px;font-size:11.8px;color:#605e5c;">22</div>
<div class="t" style="left:299.5px;top:816.00px;font-size:11.8px;color:#605e5c;">23</div>
<div class="t" style="left:299.5px;top:837.00px;font-size:11.8px;color:#605e5c;">24</div>
<div class="t" style="left:299.5px;top:858.00px;font-size:11.8px;color:#605e5c;">25</div>
<div class="t" style="left:299.5px;top:879.00px;font-size:11.8px;color:#605e5c;">26</div>
<div class="t" style="left:299.5px;top:900.00px;font-size:11.8px;color:#605e5c;">27</div>
<div class="t" style="left:299.5px;top:922.00px;font-size:11.8px;color:#605e5c;">28</div>
<div class="t" style="left:299.5px;top:943.00px;font-size:11.8px;color:#605e5c;">29</div>
<div class="t" style="left:299.5px;top:964.00px;font-size:11.8px;color:#605e5c;">30</div>
<div class="t" style="left:299.5px;top:985.00px;font-size:11.8px;color:#605e5c;">31</div>
<div class="t" style="left:299.5px;top:1006.00px;font-size:11.8px;color:#605e5c;">32</div>
<div class="r" style="left:1331px;top:197px;width:9px;height:1px;background:#d2d0ce"></div>
<div class="t" style="left:1331.0px;top:194.00px;font-size:11.5px;color:#252423;">lt_</div>
<div class="r" style="left:1331px;top:225px;width:9px;height:3px;background:#01b8aa"></div>
<div class="t" style="left:1331.0px;top:223.00px;font-size:11.5px;color:#605e5c;">e</div>
<div class="t" style="left:1331.0px;top:238.00px;font-size:11.5px;color:#605e5c;">r</div>
<div class="r" style="left:1333px;top:323px;width:3px;height:22px;background:#01b8aa"></div>
<div class="r" style="left:1338px;top:323px;width:2px;height:22px;background:#01b8aa"></div>
<div class="t" style="left:1330.0px;top:334.00px;font-size:11.0px;color:#605e5c;">nct</div>
<div class="t" style="left:1332.0px;top:354.00px;font-size:11.2px;color:#252423;font-style:italic;">2</div>
<div class="t" style="left:1332.0px;top:375.00px;font-size:11.2px;color:#252423;font-style:italic;">2</div>
<div class="t" style="left:1332.0px;top:396.00px;font-size:11.2px;color:#252423;font-style:italic;">1</div>
<div class="t" style="left:1332.0px;top:417.00px;font-size:11.2px;color:#252423;font-style:italic;">2</div>
<div class="t" style="left:1332.0px;top:438.00px;font-size:11.2px;color:#252423;font-style:italic;">1</div>
<div class="t" style="left:1332.0px;top:459.00px;font-size:11.2px;color:#252423;font-style:italic;">1</div>
<div class="t" style="left:1332.0px;top:480.00px;font-size:11.2px;color:#252423;font-style:italic;">1</div>
<div class="t" style="left:1332.0px;top:501.00px;font-size:11.2px;color:#252423;font-style:italic;">2</div>
<div class="t" style="left:1332.0px;top:522.00px;font-size:11.2px;color:#252423;font-style:italic;">2</div>
<div class="t" style="left:1332.0px;top:543.00px;font-size:11.2px;color:#252423;font-style:italic;">2</div>
<div class="t" style="left:1332.0px;top:564.00px;font-size:11.2px;color:#252423;font-style:italic;">3</div>
<div class="t" style="left:1332.0px;top:585.00px;font-size:11.2px;color:#252423;font-style:italic;">1</div>
<div class="t" style="left:1332.0px;top:606.00px;font-size:11.2px;color:#252423;font-style:italic;">0</div>
<div class="t" style="left:1332.0px;top:627.00px;font-size:11.2px;color:#252423;font-style:italic;">2</div>
<div class="t" style="left:1332.0px;top:648.00px;font-size:11.2px;color:#252423;font-style:italic;">2</div>
<div class="t" style="left:1332.0px;top:669.00px;font-size:11.2px;color:#252423;font-style:italic;">0</div>
<div class="t" style="left:1332.0px;top:690.00px;font-size:11.2px;color:#252423;font-style:italic;">2</div>
<div class="t" style="left:1332.0px;top:711.00px;font-size:11.2px;color:#252423;font-style:italic;">1</div>
<div class="t" style="left:1332.0px;top:732.00px;font-size:11.2px;color:#252423;font-style:italic;">0</div>
<div class="t" style="left:1332.0px;top:753.00px;font-size:11.2px;color:#252423;font-style:italic;">1</div>
<div class="t" style="left:1332.0px;top:774.00px;font-size:11.2px;color:#252423;font-style:italic;">2</div>
<div class="t" style="left:1332.0px;top:795.00px;font-size:11.2px;color:#252423;font-style:italic;">0</div>
<div class="t" style="left:1332.0px;top:816.00px;font-size:11.2px;color:#252423;font-style:italic;">2</div>
<div class="t" style="left:1332.0px;top:837.00px;font-size:11.2px;color:#252423;font-style:italic;">3</div>
<div class="t" style="left:1332.0px;top:858.00px;font-size:11.2px;color:#252423;font-style:italic;">1</div>
<div class="t" style="left:1332.0px;top:879.00px;font-size:11.2px;color:#252423;font-style:italic;">0</div>
<div class="t" style="left:1332.0px;top:900.00px;font-size:11.2px;color:#252423;font-style:italic;">0</div>
<div class="t" style="left:1332.0px;top:922.00px;font-size:11.2px;color:#252423;font-style:italic;">0</div>
<div class="t" style="left:1332.0px;top:943.00px;font-size:11.2px;color:#252423;font-style:italic;">3</div>
<div class="t" style="left:1332.0px;top:964.00px;font-size:11.2px;color:#252423;font-style:italic;">1</div>
<div class="t" style="left:1332.0px;top:985.00px;font-size:11.2px;color:#252423;font-style:italic;">2</div>
<div class="t" style="left:1332.0px;top:1006.00px;font-size:11.2px;color:#252423;font-style:italic;">1</div>
<div class="r" style="left:321px;top:1013px;width:160px;height:10px;background:#e6e6e6"></div>
<div class="r" style="left:480px;top:1013px;width:1px;height:10px;background:#dcdbda"></div>
<div class="r" style="left:640px;top:1013px;width:1px;height:10px;background:#dcdbda"></div>
<div class="r" style="left:800px;top:1013px;width:1px;height:10px;background:#dcdbda"></div>
<div class="r" style="left:960px;top:1013px;width:1px;height:10px;background:#dcdbda"></div>
<div class="r" style="left:1120px;top:1013px;width:1px;height:10px;background:#dcdbda"></div>
<div class="r" style="left:1280px;top:1013px;width:1px;height:10px;background:#dcdbda"></div>
<div class="t" style="right:863.0px;top:1004.00px;font-size:11.5px;color:#252423;">003018</div>
<div class="t" style="right:703.0px;top:1004.00px;font-size:11.5px;color:#252423;">805636</div>
<div class="t" style="right:543.0px;top:1004.00px;font-size:11.5px;color:#252423;">6</div>
<div class="t" style="right:383.0px;top:1004.00px;font-size:11.5px;color:#252423;">09/03/2024 16:41:37</div>
<div class="t" style="right:223.0px;top:1004.00px;font-size:11.5px;color:#252423;">11/03/2024 11:49:13</div>
<div class="t" style="right:63.0px;top:1004.00px;font-size:11.5px;color:#252423;">10/03/2024 17:31:36</div>
<div class="t" style="left:1333.0px;top:1004.00px;font-size:11.5px;color:#252423;">1</div>
<div class="r" style="left:307px;top:173px;width:1024px;height:836px;background:#1a5183;border:1px solid #202a33"></div>
<div class="r" style="left:315px;top:204px;width:1008px;height:798px;background:#ffffff"></div>
<svg class="r" style="left:323px;top:179px" width="17" height="18" viewBox="0 0 17 18"><rect x="8.5" y="0" width="5" height="9" fill="#e6a800"/><rect x="4.5" y="4" width="5" height="7" fill="#f2c811"/><rect x="0.5" y="8" width="5" height="9" fill="#f7dc5a"/><rect x="5.5" y="10" width="10.5" height="7.5" fill="#3b3b3b"/><text x="6.3" y="16.6" font-size="7" font-weight="bold" fill="#fff" font-family="Liberation Sans">RS</text></svg>
<div class="t" style="left:344.6px;top:169.00px;font-size:11.4px;color:#ffffff;">Éditeur avancé</div>
<div class="r" style="left:1185px;top:173px;width:47px;height:31px;background:#1a5183;border:1px solid #1b2733"></div>
<div class="r" style="left:1231px;top:173px;width:47px;height:31px;background:#1a5183;border:1px solid #1b2733"></div>
<div class="r" style="left:1277px;top:173px;width:47px;height:31px;background:#c45a4e;border:1px solid #3a2a2a;border-top-color:#202a33;border-right:none"></div>
<div class="r" style="left:1203px;top:189px;width:10px;height:3px;background:#0f2c47"></div>
<div class="r" style="left:1250px;top:184px;width:11px;height:9px;border:2px solid #000"></div>
<svg class="r" style="left:1295px;top:183px" width="12" height="11" viewBox="0 0 12 11"><path d="M2.5 2.3 L9.5 9.2 M9.5 2.3 L2.5 9.2" stroke="#000" stroke-width="2.8" stroke-linecap="square"/></svg>
<div class="t" style="left:345px;top:223.5px;font-size:33px;color:#707070;transform:scaleX(0.83);transform-origin:0 0;">f_task</div>
<svg class="r" style="left:1135px;top:243px" width="126" height="18" viewBox="0 0 126 18"><rect x="2.3" y="1.8" width="121.5" height="14" fill="none" stroke="#111" stroke-width="1.7" stroke-dasharray="1.7 2.6"/></svg>
<div class="t" style="left:1137.5px;top:233.00px;font-size:12.0px;color:#333333;">Options d’affichage</div>
<svg class="r" style="left:1247px;top:249px" width="7" height="5" viewBox="0 0 7 5"><path d="M0 0.5 H6 L3 4 Z" fill="#9a9a9a"/></svg>
<svg class="r" style="left:1277px;top:244px" width="17" height="17" viewBox="0 0 17 17"><circle cx="8.5" cy="8.5" r="8.3" fill="#4a7bb5"/><text x="8.5" y="13.3" text-anchor="middle" font-size="12.5" font-weight="bold" fill="#fff" font-family="Liberation Sans">?</text></svg>
<div class="r" style="left:345px;top:282px;width:950px;height:627px;background:#fffffd;border:1px solid #c8c8c8"></div>
<div class="r" style="left:362px;top:283px;width:918px;height:16px;border:2px solid #ededed;border-left:none;border-right:none"></div>
<div class="r" style="left:1280px;top:283px;width:14px;height:625px;background:#fffffd;border-left:1px solid #e4e4e4"></div>
<div class="r" style="left:1280px;top:283px;width:14px;height:320px;background:#c1c1c1;border-left:1px solid #b0b0b0"></div>
<div class="r" style="left:1280px;top:283px;width:14px;height:16px;border:1px solid #b4b4b4;border-top:none"></div>
<div class="r" style="left:362px;top:299px;width:1px;height:560px;background:#dadada"></div>
<div class="r" style="left:362px;top:875px;width:1px;height:16px;background:#dadada"></div>
<div class="r" style="left:388px;top:331px;width:1px;height:464px;background:#dadada"></div>
<div class="r" style="left:415px;top:363px;width:1px;height:336px;background:#dadada"></div>
<div class="r" style="left:441px;top:523px;width:1px;height:64px;background:#dadada"></div>
<div class="r" style="left:441px;top:619px;width:1px;height:64px;background:#dadada"></div>
<div class="code" style="left:361px;top:284px;"><span class="k">let</span>
    Source = PostgreSQL.Database(db_ip, db_name),
    Query = Value.NativeQuery(
        Source,
        <span class="s">"select *,</span>
            <span class="s">tae_date_a_faire::date as tae_date_a_faire_date,</span>
            <span class="s">tae_date_a_faire::time as tae_date_a_faire_time,</span>
            <span class="s">tae_date_der_etat::date as tae_date_der_etat_date,</span>
            <span class="s">tae_date_der_etat::time as tae_date_der_etat_time,</span>
            <span class="s">to_char(tae_date_der_etat, 'HH24:00:00')::time as tae_date_der_etat_hour,</span>
            <span class="s">to_char(tae_date_der_etat, 'HH24:00:00') as tae_date_der_etat_hour_format,</span>
            <span class="s">tae_date_creation::date as tae_date_creation_date,</span>
            <span class="s">tae_date_creation::time as tae_date_creation_time</span>
            <span class="s">/*,</span>
            <span class="s">calc_interval_seconds(</span>
                <span class="s">tae_date_a_faire,</span>
                <span class="s">cqu_dt_fin,</span>
                <span class="s">(select min(acv_code)</span>
                <span class="s">from calendrier_jours_feries)</span>
            <span class="s">) as reponse_duree,</span>
            <span class="s">calc_interval_seconds(</span>
                <span class="s">tae_date_a_faire,</span>
                <span class="s">cqu_dt_deb,</span>
                <span class="s">(select min(acv_code)</span>
                <span class="s">from calendrier_jours_feries)</span>
            <span class="s">) as delais_duree*/</span>
        <span class="s">from report.f_task_v2"</span>,
        <span class="c">// where</span>
        <span class="c">//     tae_date_a_faire &gt; NOW()::date - '" &amp; Number.ToText(historique) &amp; "'::int or</span>
        <span class="c">//     ref_id_statut &lt;&gt; 6",</span>
        <span class="n">null</span>,
        [EnableFolding=<span class="k">true</span>]),
    #"Changed Type" = Table.TransformColumnTypes(Query,{{<span class="s">"tae_date_der_etat_date"</span>, <span class="k">type</span> <span class="n">date</span>}, {<span class="s">"tae_date_a_faire_date"</span>, <span class="k">type</span> <span class="n">date</span>}}),
    #"Replaced Value" = Table.ReplaceValue(#"Changed Type",<span class="n">null</span>,<span class="s">"Non renseigné"</span>,Replacer.ReplaceValue,{<span class="s">"domaine"</span>}),
    #"Replaced Value1" = Table.ReplaceValue(#"Replaced Value",<span class="n">null</span>,<span class="s">"Non renseigné"</span>,Replacer.ReplaceValue,{<span class="s">"univers"</span>}),
    #"Lignes filtrées" = Table.SelectRows(#"Replaced Value1", <span class="k">each</span> <span class="k">true</span>)
<span class="k">in</span>
    #"Lignes filtrées"</div>
<svg class="r" style="left:0;top:0" width="700" height="900">
<g fill="none" stroke="#b2e11c" stroke-width="5">
<rect x="402.5" y="344.5" width="99" height="17"/>
<rect x="391.5" y="697.5" width="199" height="18"/>
<path d="M404.0 341.0 C402.8 342.8 399.4 347.8 397.0 352.0 C394.6 356.2 391.9 361.2 389.6 366.0 C387.3 370.8 385.3 375.8 383.4 381.0 C381.5 386.2 379.8 390.2 378.0 397.0 C376.2 403.8 375.1 410.7 372.9 422.0 C370.7 433.3 366.7 450.3 365.0 465.0 C363.3 479.7 363.1 494.2 362.5 510.0 C361.9 525.8 361.5 545.5 361.5 560.0 C361.5 574.5 361.5 583.0 362.3 597.0 C363.1 611.0 364.5 628.3 366.3 644.0 C368.1 659.7 370.0 675.3 372.9 691.0 C375.8 706.7 379.7 723.8 383.4 738.0 C387.1 752.2 393.1 769.7 395.0 776.0" stroke-linecap="round"/>
<path d="M376.5 774.0 C373.6 777.0 362.8 785.3 359.0 792.0 C355.2 798.7 354.1 806.8 353.6 814.0 C353.1 821.2 352.9 828.6 356.0 835.0 C359.1 841.4 369.8 849.6 372.5 852.5" stroke-linecap="round"/>
</g></svg>
<svg class="r" style="left:346px;top:913px" width="16" height="14" viewBox="0 0 16 14"><path d="M1.5 7.5 L5.5 11.5 L14.5 1.5" stroke="#3e9c85" stroke-width="2.4" fill="none"/></svg>
<div class="t" style="left:368.7px;top:900.00px;font-size:12.65px;color:#333333;">Aucune erreur de syntaxe n&#x27;a été détectée.</div>
<div class="r" style="left:1160px;top:950px;width:60px;height:22px;background:#117865"></div>
<div class="t" style="left:1182.8px;top:942.00px;font-size:10.0px;color:#ffffff;">OK</div>
<div class="r" style="left:1233px;top:950px;width:60px;height:22px;background:#fff;border:1px solid #7a7a7a"></div>
<div class="t" style="left:1245.1px;top:942.00px;font-size:10.38px;color:#333333;">Annuler</div>
</body></html>
